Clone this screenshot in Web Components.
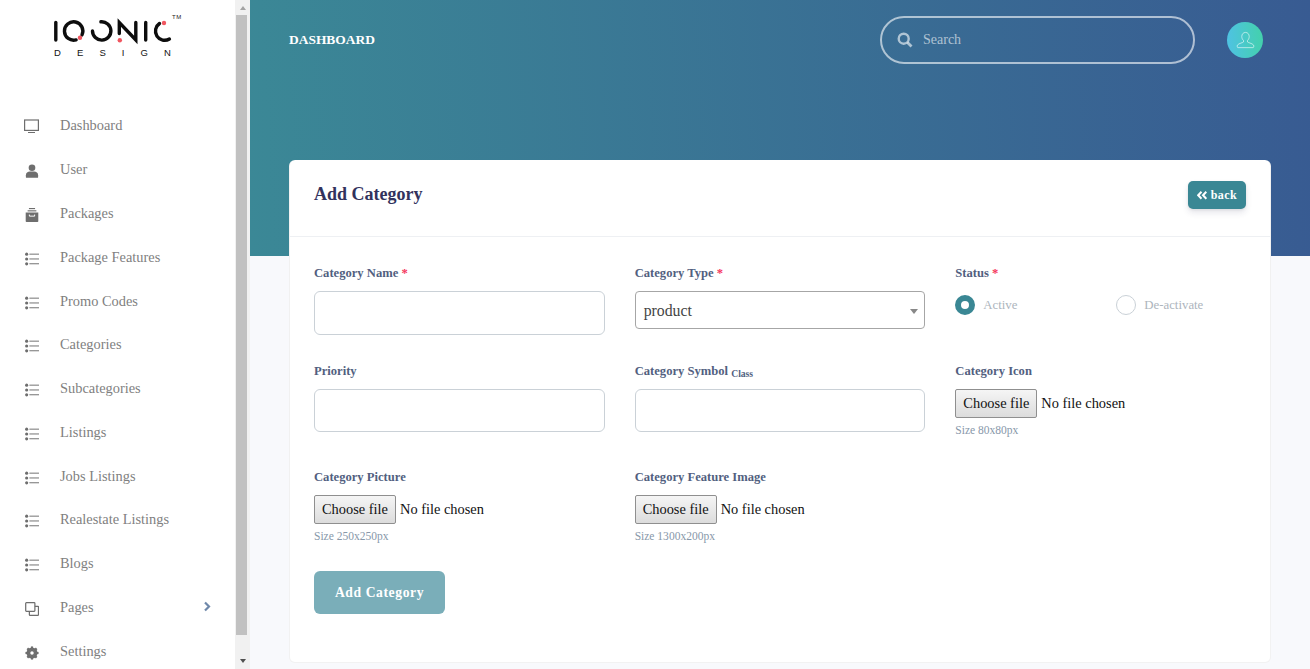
<!DOCTYPE html>
<html lang="en">
<head>
<meta charset="utf-8">
<title>Add Category</title>
<style>
html,body{margin:0;height:669px;overflow:hidden;background:#f8f9fc;font-family:"Liberation Serif",serif}
</style>
</head>
<body>
<app-shell>
  <side-bar slot="side">
    <nav-item icon="desktop">Dashboard</nav-item>
    <nav-item icon="user">User</nav-item>
    <nav-item icon="box">Packages</nav-item>
    <nav-item icon="list">Package Features</nav-item>
    <nav-item icon="list">Promo Codes</nav-item>
    <nav-item icon="list">Categories</nav-item>
    <nav-item icon="list">Subcategories</nav-item>
    <nav-item icon="list">Listings</nav-item>
    <nav-item icon="list">Jobs Listings</nav-item>
    <nav-item icon="list">Realestate Listings</nav-item>
    <nav-item icon="list">Blogs</nav-item>
    <nav-item icon="clone" chevron>Pages</nav-item>
    <nav-item icon="cog">Settings</nav-item>
  </side-bar>
  <scroll-rail slot="side"></scroll-rail>
  <top-header slot="head"></top-header>
  <form-card slot="card">
    <field-group style="margin-bottom:26px"><span slot="label">Category Name <b>*</b></span><text-box tall></text-box></field-group>
    <field-group style="margin-bottom:26px"><span slot="label">Category Type <b>*</b></span><select-box>product</select-box></field-group>
    <field-group style="margin-bottom:26px"><span slot="label">Status <b>*</b></span><radio-row></radio-row></field-group>
    <field-group><span slot="label">Priority</span><text-box></text-box></field-group>
    <field-group><span slot="label">Category Symbol <small>Class</small></span><text-box></text-box></field-group>
    <field-group style="margin-bottom:28px"><span slot="label">Category Icon</span><file-field hint="Size 80x80px"></file-field></field-group>
    <field-group style="margin-bottom:26px"><span slot="label">Category Picture</span><file-field hint="Size 250x250px"></file-field></field-group>
    <field-group style="margin-bottom:26px"><span slot="label">Category Feature Image</span><file-field hint="Size 1300x200px"></file-field></field-group>
  </form-card>
</app-shell>
<script>
const ICONS={
desktop:'<svg style="width:16px;height:15px;margin:0" viewBox="0 0 16 15"><rect x=".6" y="1" width="13.8" height="10.400" fill="none" stroke="currentColor" stroke-width="1.200"/><rect x="4" y="13" width="7" height="1" fill="currentColor"/></svg>',
user:'<svg viewBox="0 0 16 16"><circle cx="8" cy="4.300" r="3.800" fill="currentColor"/><path d="M1 15v-2.200C1 10.300 3.200 8.700 5.600 8.700h4.800c2.400 0 4.600 1.600 4.600 4.100V15c0 .5-.5.800-1 .8H2c-.5 0-1-.3-1-.8z" fill="currentColor"/></svg>',
box:'<svg viewBox="0 0 16 16"><rect x="4.500" y="0" width="7" height="1.300" fill="currentColor"/><rect x="3" y="2.600" width="10" height="1.300" fill="currentColor"/><path d="M.8 5h14.400v10c0 .5-.4.900-.9.900H1.700c-.5 0-.9-.4-.9-.9z" fill="currentColor"/><path d="M5 7.500v1.800h6V7.500" fill="none" stroke="#fff" stroke-width="1.100"/></svg>',
list:'<svg viewBox="0 0 16 16"><g fill="currentColor"><circle cx="1.900" cy="2.500" r="1.800"/><circle cx="1.900" cy="8" r="1.800"/><circle cx="1.900" cy="13.500" r="1.800"/><rect x="5" y="1.900" width="11" height="1.100"/><rect x="5" y="7.400" width="11" height="1.100"/><rect x="5" y="12.900" width="11" height="1.100"/></g></svg>',
clone:'<svg viewBox="0 0 16 16"><g fill="none" stroke="currentColor" stroke-width="1.400"><rect x=".8" y=".8" width="10.500" height="9.800" rx=".8"/><path d="M11.300 5H15c.3 0 .4.200.4.500v9c0 .5-.3.800-.8.800H5.800c-.5 0-.8-.3-.8-.8v-3.900"/></g></svg>',
cog:'<svg viewBox="0 0 16 16"><circle cx="8" cy="8" r="4.800" fill="none" stroke="currentColor" stroke-width="3"/><g stroke="currentColor" stroke-width="2.500"><line x1="8" y1=".5" x2="8" y2="15.500"/><line x1=".5" y1="8" x2="15.500" y2="8"/><line x1="2.700" y1="2.700" x2="13.300" y2="13.300"/><line x1="13.300" y1="2.700" x2="2.700" y2="13.300"/></g><circle cx="8" cy="8" r="2" fill="#fff"/></svg>'
};
function make(name,html,extra){
  const t=document.createElement('template');t.innerHTML=html;
  customElements.define(name,class extends HTMLElement{
    constructor(){super();this.attachShadow({mode:'open'}).appendChild(t.content.cloneNode(true));}
    connectedCallback(){extra&&extra.call(this,this.shadowRoot);}
  });
}
make('app-shell',`<style>
:host{display:flex;width:1310px;height:669px;overflow:hidden}
.side{display:flex;flex:0 0 250px;height:669px;background:#fff}
main{flex:1;min-width:0}
.wrap{padding:0 39px;margin-top:-96px}
</style>
<div class="side"><slot name="side"></slot></div>
<main><slot name="head"></slot><div class="wrap"><slot name="card"></slot></div></main>`);

make('side-bar',`<style>
:host{display:block;width:235px;height:669px;overflow:hidden;background:#fff;color:#7a7a7a}
.logo{height:103.615px;padding:14px 0 0 52px;box-sizing:border-box;position:relative;opacity:.99}
svg{display:block}
.design{display:flex;width:117px;justify-content:space-between;font:9.500px/10px "Liberation Sans",sans-serif;color:#111;margin:2px 0 0 2px}
.tm{position:absolute;left:172px;top:13px;font:6px/8px "Liberation Sans",sans-serif;color:#222;letter-spacing:.5px}
</style>
<div class="logo" role="img" aria-label="IOONIC DESIGN">
<svg width="126" height="32" viewBox="52 14 126 32" fill="none" stroke="#0b0b0b" stroke-width="3.400" stroke-linecap="round">
<line x1="55.800" y1="22.500" x2="55.800" y2="40"/>
<path d="M76.100 39.900A9.200 9.200 0 1 1 82 34.900"/>
<path d="M100.900 21.800A9.200 9.200 0 1 1 92.500 31"/>
<path d="M119.300 33.500V22.500L135.800 40V22.500"/>
<line x1="145.700" y1="22.500" x2="145.700" y2="40"/>
<path d="M169.400 39A9.200 9.200 0 0 1 159.500 23.500"/>
<g fill="#f0555f" stroke="none"><circle cx="80" cy="37.700" r="2.200"/><circle cx="119.800" cy="40.300" r="2.200"/><circle cx="164" cy="23" r="2.200"/></g>
</svg>
<div class="design"><span>D</span><span>E</span><span>S</span><span>I</span><span>G</span><span>N</span></div>
<span class="tm">TM</span>
</div>
<slot></slot>`);

make('nav-item',`<style>
:host{display:flex;align-items:center;height:43.770px;padding-left:24px;font:14.400px/20px "Liberation Serif",serif;color:#7f7f7f;box-sizing:border-box;position:relative}
.i{flex:0 0 36px;height:16px;margin-top:4px;color:#6e6e6e}
.i svg{display:block;width:14px;height:14px;margin:1px 0 0 1px}
.t{flex:1}
.c{flex:0 0 auto;margin-right:24px;color:#6f88aa}
.c svg{display:block}
</style><span class="i"></span><span class="t"><slot></slot></span><span class="c"></span>`,function(r){
  r.querySelector('.i').innerHTML=ICONS[this.getAttribute('icon')];
  if(this.hasAttribute('chevron'))r.querySelector('.c').innerHTML='<svg width="8" height="11" viewBox="0 0 8 11"><path d="M2 1.500 6 5.500 2 9.500" fill="none" stroke="currentColor" stroke-width="2.200"/></svg>';
});

make('scroll-rail',`<style>
:host{display:flex;flex-direction:column;flex:0 0 15px;height:669px;background:#f1f1f1;align-items:center}
.top,.bot{flex:0 0 15px;display:flex;align-items:center;justify-content:center;width:100%}
.top::before{content:"";border:3.500px solid transparent;border-top:0;border-bottom:4px solid #a3a3a3}
.bot{flex:0 0 34px;align-items:flex-end;padding-bottom:6px;box-sizing:border-box}
.bot::before{content:"";border:3.500px solid transparent;border-bottom:0;border-top:4px solid #505050}
.thumb{flex:0 0 620px;width:11px;margin-right:2px;background:#c1c1c1}
</style><div class="top"></div><div class="thumb"></div><div class="bot"></div>`);

make('top-header',`<style>
:host{display:flex;align-items:flex-start;justify-content:space-between;height:256px;box-sizing:border-box;padding:16px 47px 0 39px;background:linear-gradient(87deg,#3b8896 0,#385b92 100%);color:#fff}
h1{margin:0;font:bold 13.440px/48px "Liberation Serif",serif;text-transform:uppercase}
.right{display:flex;align-items:flex-start;gap:32px}
.search{display:flex;align-items:center;gap:10px;width:315px;height:48px;box-sizing:border-box;padding:0 0 0 15px;border:2px solid rgba(255,255,255,.6);border-radius:24px}
.search svg{flex:none}
input{flex:1;min-width:0;background:none;border:0;outline:0;padding:0;font:14px/20px "Liberation Serif",serif;color:#fff}
input::placeholder{color:rgba(255,255,255,.6);opacity:1}
.av{width:36px;height:36px;margin-top:6px;border-radius:50%;background:linear-gradient(87deg,#4fc2e4,#43d1ab);display:flex;align-items:center;justify-content:center}
</style>
<h1>Dashboard</h1>
<div class="right">
<div class="search">
<svg width="16" height="16" viewBox="0 0 16 16" fill="none" stroke="rgba(255,255,255,.6)"><circle cx="6.700" cy="6.700" r="5" stroke-width="2.400"/><line x1="10.500" y1="10.500" x2="14.500" y2="14.500" stroke-width="2.800"/></svg>
<input placeholder="Search" aria-label="Search">
</div>
<div class="av"><svg width="19" height="19" viewBox="0 0 20 20" fill="none" stroke="rgba(255,255,255,.6)" stroke-width="1"><path d="M10 1.500c2.400 0 3.900 1.900 3.900 4.300 0 1.700-.7 3.200-1.800 4.200v1.500c0 .8 4.900 1.300 6.300 3.200.5.800.4 2.800-.4 2.800H2c-.8 0-.9-2-.4-2.800 1.400-1.900 6.300-2.400 6.300-3.200V10C6.800 9 6.100 7.500 6.100 5.800c0-2.400 1.500-4.300 3.900-4.300z"/></svg></div>
</div>`);

make('form-card',`<style>
:host{display:block;height:503px;box-sizing:border-box;background:#fff;border:1px solid rgba(0,0,0,.05);border-top:0;border-radius:6px;position:relative}
header{display:flex;align-items:flex-start;justify-content:space-between;height:77px;box-sizing:border-box;padding:21px 24px 0 24px;border-bottom:1px solid #eef0f3}
h3{margin:0;font:bold 18px/26px "Liberation Serif",serif;color:#32325d}
.back{display:flex;align-items:center;gap:4px;height:28px;box-sizing:border-box;padding:0 9px;border-radius:5px;background:#3a8794;color:#fff;font:bold 12px/16px "Liberation Serif",serif;letter-spacing:.4px;box-shadow:0 4px 6px rgba(50,50,93,.11),0 1px 3px rgba(0,0,0,.08)}
.body{padding:26px 24px 0}
.grid{display:grid;grid-template-columns:repeat(3,minmax(0,1fr));column-gap:30px;align-items:start}
.submit{display:flex;align-items:center;justify-content:center;width:131px;height:43px;border-radius:6px;background:#7aaeb9;color:#fff;font:bold 13.600px/20px "Liberation Serif",serif;letter-spacing:.6px}
</style>
<header><h3>Add Category</h3>
<div class="back"><svg width="10" height="9" viewBox="0 0 10 9" fill="none" stroke="#fff" stroke-width="2"><path d="M4.500 .8 1.200 4.300 4.500 7.800M9.300 .8 6 4.300 9.300 7.800"/></svg><span>back</span></div></header>
<div class="body"><div class="grid"><slot></slot></div><div class="submit">Add Category</div></div>`);

make('field-group',`<style>
:host{display:block}
.l{font:bold 12.600px/20px "Liberation Serif",serif;color:#525f7f;margin-bottom:8px;height:20px}
::slotted(span){white-space:nowrap}
</style><div class="l"><slot name="label"></slot></div><slot></slot>`,function(){
  const s=this.querySelector('[slot=label]');
  const b=s&&s.querySelector('b');if(b)b.style.cssText='color:#f5365c;font-weight:bold';
  const m=s&&s.querySelector('small');if(m)m.style.cssText='font-size:9.600px;position:relative;top:2px';
});

make('text-box',`<style>
:host{display:block}
input{display:block;width:100%;height:43px;box-sizing:border-box;border:1px solid #cad1d7;border-radius:6px;background:#fff;outline:0;padding:0 9px;font:16px "Liberation Serif",serif}
:host([tall]) input{height:44px}
</style><input>`);

make('select-box',`<style>
:host{display:flex;align-items:center;justify-content:space-between;height:38px;box-sizing:border-box;border:1px solid #a6a6a6;border-radius:4px;background:#fff;padding:2px 6px 0 8px;font:15.800px/24px "Liberation Serif",serif;color:#444}
i{border:4.500px solid transparent;border-bottom:0;border-top:5px solid #888;margin-top:1px}
</style><span><slot></slot></span><i></i>`);

make('radio-row',`<style>
:host{display:flex;align-items:center;height:28px;font:12.800px/20px "Liberation Serif",serif;color:#adb5bd}
.o{display:flex;align-items:center;gap:8px;flex:none}
.first{width:161px}
.r{width:20px;height:20px;box-sizing:border-box;border-radius:50%;border:1px solid #cad1d7;background:#fff}
.on{border:6.500px solid #3a8794}
</style><div class="o first"><span class="r on"></span><span>Active</span></div><div class="o"><span class="r"></span><span>De-activate</span></div>`);

make('file-field',`<style>
:host{display:block}
.row{display:flex;align-items:center;height:29px;font:14.400px/19px "Liberation Serif",serif;color:#111;gap:4px}
.b{display:flex;align-items:center;justify-content:center;width:82px;height:29px;box-sizing:border-box;border:1px solid #8f8f8f;border-radius:2px;background:linear-gradient(#f5f5f5,#dcdcdc)}
.h{font:11.520px/18px "Liberation Serif",serif;color:#8898aa;margin-top:3px}
</style><div class="row"><span class="b">Choose file</span><span>No file chosen</span></div><div class="h"></div>`,function(r){
  r.querySelector('.h').textContent=this.getAttribute('hint');
});
</script>
</body>
</html>
